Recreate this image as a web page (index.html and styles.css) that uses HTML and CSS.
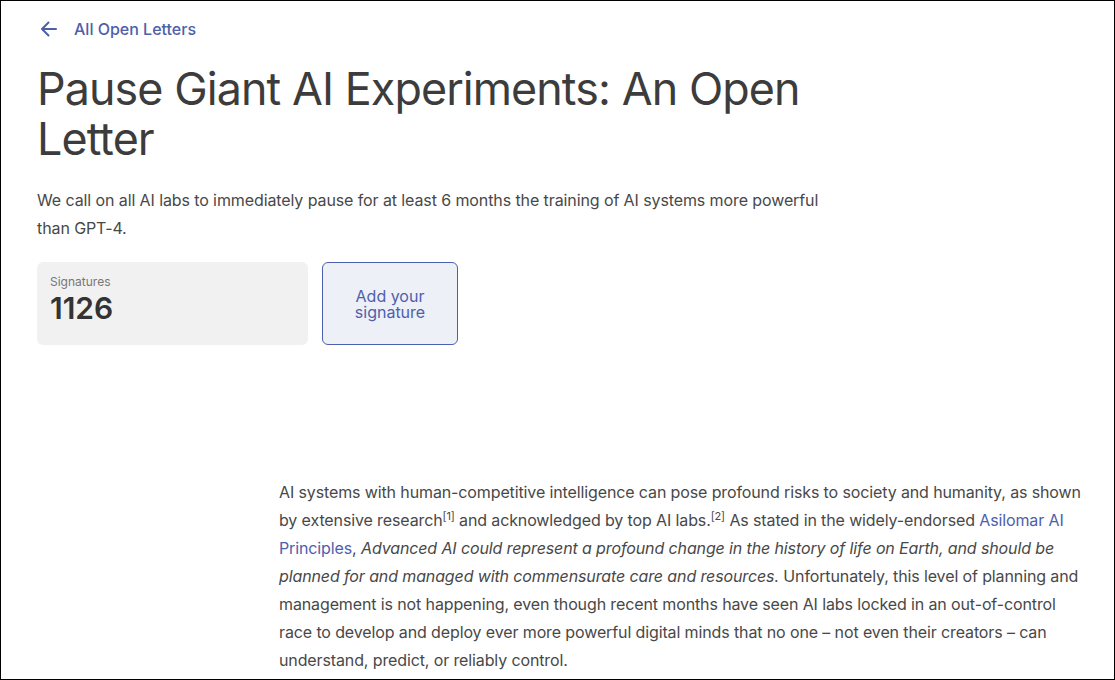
FILE: index.html
```html
<!DOCTYPE html>
<html lang="en">
<head>
<meta charset="utf-8">
<title>Pause Giant AI Experiments: An Open Letter</title>
<link rel="stylesheet" href="styles.css">
</head>
<body>
<div class="frame">
  <header class="top">
    <a class="back" href="#">
      <svg class="back-icon" width="20" height="20" viewBox="0 0 20 20" fill="none" stroke="currentColor" stroke-width="2" stroke-linecap="round" stroke-linejoin="round"><path d="M17 10H3.5"/><path d="M9.5 3.5L3 10l6.5 6.5"/></svg>
      <span>All Open Letters</span>
    </a>
    <h1 class="title">Pause Giant AI Experiments: An Open Letter</h1>
    <p class="lede">We call on all AI labs to immediately pause for at least 6 months the training of AI systems more powerful than GPT-4.</p>
    <div class="actions">
      <div class="count-card">
        <div class="count-label">Signatures</div>
        <div class="count-value">1126</div>
      </div>
      <a class="sign-btn" href="#">Add your<br>signature</a>
    </div>
  </header>
  <main class="content">
    <p class="body-text">AI systems with human-competitive intelligence can pose profound risks to society and humanity, as shown by extensive research<sup>[1]</sup> and acknowledged by top AI labs.<sup>[2]</sup> As stated in the widely-endorsed <a href="#">Asilomar AI Principles</a>, <em>Advanced AI could represent a profound change in the history of life on Earth, and should be planned for and managed with commensurate care and resources.</em> Unfortunately, this level of planning and management is not happening, even though recent months have seen AI labs locked in an out-of-control race to develop and deploy ever more powerful digital minds that no one – not even their creators – can understand, predict, or reliably control.</p>
  </main>
</div>
</body>
</html>
```

FILE: styles.css
```css
html, body {
  margin: 0;
  padding: 0;
  background: #fff;
}
body {
  font-family: Inter, "Noto Sans", "Liberation Sans", sans-serif;
  color: #444;
}
.frame {
  box-sizing: border-box;
  width: 1115px;
  height: 680px;
  border: 1px solid #000;
  overflow: hidden;
  padding: 0 0 0 36px;
}
.top {
  width: 800px;
}
.back {
  display: flex;
  align-items: center;
  gap: 15px;
  margin-top: 17px;
  color: #4d60aa;
  text-decoration: none;
  font-size: 16px;
  font-weight: 500;
  height: 22px;
}
.back-icon {
  margin-left: 2px;
}
.title {
  margin: 24px 0 0;
  font-size: 44.8px;
  line-height: 50px;
  font-weight: 400;
  color: #3c3c3c;
  letter-spacing: -0.9px;
}
.lede {
  margin: 22px 0 0;
  font-size: 16px;
  line-height: 28px;
  color: #484848;
  letter-spacing: -0.1px;
  width: 812px;
}
.actions {
  display: flex;
  gap: 14px;
  margin-top: 20px;
}
.count-card {
  box-sizing: border-box;
  width: 271px;
  height: 83px;
  background: #f1f1f1;
  border-radius: 6px;
  padding: 13px 13px;
}
.count-label {
  font-size: 12px;
  line-height: 14px;
  color: #777;
}
.count-value {
  font-size: 30px;
  line-height: 36px;
  font-weight: 600;
  color: #333;
  margin-top: 1px;
}
.sign-btn {
  box-sizing: border-box;
  width: 136px;
  height: 83px;
  border: 1px solid #4d60aa;
  border-radius: 6px;
  background: #eef0f8;
  color: #4d60aa;
  text-decoration: none;
  font-size: 16px;
  line-height: 16px;
  display: flex;
  align-items: center;
  justify-content: center;
  text-align: center;
}
.content {
  padding-left: 242px;
  margin-top: 133px;
}
.body-text {
  margin: 0;
  width: 805px;
  font-size: 16px;
  line-height: 28px;
  color: #484848;
  letter-spacing: -0.12px;
}
.body-text sup {
  font-size: 11px;
  line-height: 0;
  vertical-align: 0;
  position: relative;
  top: -6px;
}
.body-text a {
  color: #4d60aa;
  text-decoration: none;
}
```
